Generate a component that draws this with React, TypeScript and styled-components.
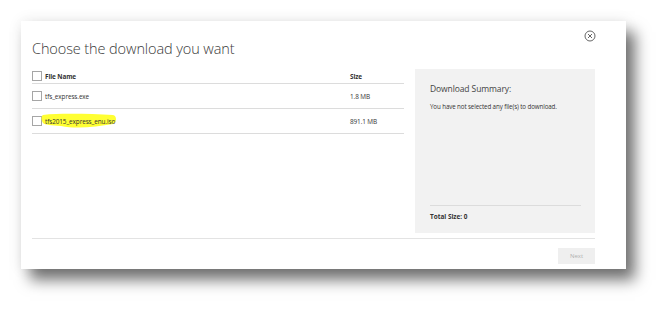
import React from "react";
import styled, { createGlobalStyle } from "styled-components";

const Global = createGlobalStyle`
  html, body { margin: 0; padding: 0; background: #ffffff; }
  body { font-family: "Open Sans", "Liberation Sans", sans-serif; }
  #root { width: 668px; height: 312px; overflow: hidden; }
`;

const Page = styled.div`
  padding: 21px 0 0 21px;
  width: 668px;
  height: 312px;
  box-sizing: border-box;
`;

const Dialog = styled.div`
  position: relative;
  width: 605px;
  height: 248px;
  box-sizing: border-box;
  background: #fff;
  padding: 18px 31px 0 11px;
  box-shadow: 9px 11px 14px rgba(0, 0, 0, 0.55), 0 0 14px rgba(0, 0, 0, 0.08);
  display: flex;
  flex-direction: column;
`;

const Title = styled.h1`
  margin: 0;
  font-weight: 300;
  font-size: 14.5px;
  line-height: 20px;
  color: #3a3a3a;
  letter-spacing: -0.1px;
`;

const Close = styled.button`
  position: absolute;
  top: 9px;
  right: 30px;
  width: 12px;
  height: 12px;
  padding: 0;
  border: none;
  background: none;
  display: flex;
`;

const Body = styled.div`
  margin-top: 10px;
  display: grid;
  grid-template-columns: 372px 180px;
  column-gap: 11px;
  height: 164px;
`;

const Table = styled.div`
  display: flex;
  flex-direction: column;
`;

const Row = styled.div<{ $h: number }>`
  display: grid;
  grid-template-columns: 13px 305px 1fr;
  align-items: center;
  height: ${(p) => p.$h}px;
  border-bottom: 1px solid #dcdcdc;
  font-size: 6.4px;
  color: #333;
`;

const Box = styled.span`
  width: 8px;
  height: 8px;
  border: 1px solid #a6a6a6;
  background: #fff;
`;

const Cell = styled.span<{ $bold?: boolean }>`
  position: relative;
  font-weight: ${(p) => (p.$bold ? 700 : 400)};
  white-space: nowrap;
  letter-spacing: -0.1px;
`;

const Marker = styled.svg`
  position: absolute;
  left: -4px;
  top: -5px;
  width: 76px;
  height: 17px;
  z-index: 0;
`;

const MarkText = styled.span`
  position: relative;
  z-index: 1;
`;

const Summary = styled.div`
  background: #f2f2f2;
  padding: 14px 14px 0 15px;
  display: flex;
  flex-direction: column;
`;

const SumTitle = styled.div`
  font-size: 8.5px;
  font-weight: 400;
  color: #444;
  letter-spacing: -0.1px;
`;

const SumText = styled.div`
  margin-top: 8px;
  font-size: 6.2px;
  color: #333;
  letter-spacing: -0.1px;
`;

const SumFoot = styled.div`
  margin-top: auto;
  margin-bottom: 12px;
  border-top: 1px solid #dcdcdc;
  padding-top: 6px;
  font-size: 6.4px;
  font-weight: 700;
  color: #333;
`;

const Footer = styled.div`
  margin-top: 5px;
  border-top: 1px solid #e3e3e3;
  display: flex;
  justify-content: flex-end;
  padding-top: 9px;
`;

const Next = styled.button`
  width: 37px;
  height: 16px;
  border: none;
  background: #efefef;
  color: #b0b0b0;
  font-family: inherit;
  font-size: 6px;
  padding: 0;
`;

export default function App() {
  return (
    <>
      <Global />
      <Page>
        <Dialog>
          <Title>Choose the download you want</Title>
          <Close aria-label="close">
            <svg width="12" height="12" viewBox="0 0 12 12">
              <circle cx="6" cy="6" r="5" fill="none" stroke="#555" strokeWidth="0.9" />
              <path d="M4 4 L8 8 M8 4 L4 8" stroke="#555" strokeWidth="0.9" />
            </svg>
          </Close>
          <Body>
            <Table>
              <Row $h={14}>
                <Box />
                <Cell $bold>File Name</Cell>
                <Cell $bold>Size</Cell>
              </Row>
              <Row $h={24}>
                <Box />
                <Cell>tfs_express.exe</Cell>
                <Cell>1.8 MB</Cell>
              </Row>
              <Row $h={24}>
                <Box />
                <Cell>
                  <Marker viewBox="0 0 76 17">
                    <path
                      d="M2 3 C20 1 50 2 72 3 C76 4 76 10 72 12 C55 15 35 17 20 14 C10 13 4 13 2 11 C0 8 0 4 2 3 Z"
                      fill="#ffff33"
                    />
                  </Marker>
                  <MarkText>tfs2015_express_enu.iso</MarkText>
                </Cell>
                <Cell>891.1 MB</Cell>
              </Row>
            </Table>
            <Summary>
              <SumTitle>Download Summary:</SumTitle>
              <SumText>You have not selected any file(s) to download.</SumText>
              <SumFoot>Total Size: 0</SumFoot>
            </Summary>
          </Body>
          <Footer>
            <Next>Next</Next>
          </Footer>
        </Dialog>
      </Page>
    </>
  );
}
